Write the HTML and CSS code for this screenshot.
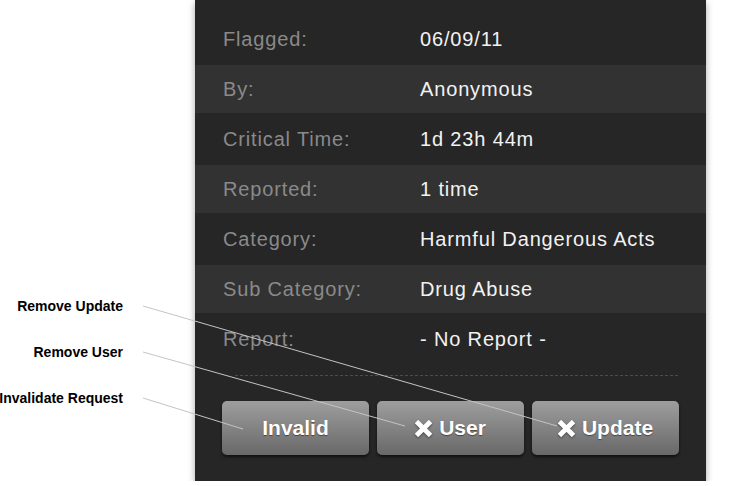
FILE: index.html
```html
<!DOCTYPE html>
<html lang="en">

<head>
  <meta charset="utf-8" />
  <title>Flag detail</title>
  <link rel="stylesheet" href="styles.css">
</head>

<body>
  <div class="panel">
    <div class="rows">
      <div class="row">
        <span class="label">Flagged:</span>
        <span class="value">06/09/11</span>
      </div>
      <div class="row alt">
        <span class="label">By:</span>
        <span class="value">Anonymous</span>
      </div>
      <div class="row">
        <span class="label">Critical Time:</span>
        <span class="value">1d 23h 44m</span>
      </div>
      <div class="row alt">
        <span class="label">Reported:</span>
        <span class="value">1 time</span>
      </div>
      <div class="row">
        <span class="label">Category:</span>
        <span class="value">Harmful Dangerous Acts</span>
      </div>
      <div class="row alt">
        <span class="label">Sub Category:</span>
        <span class="value">Drug Abuse</span>
      </div>
      <div class="row">
        <span class="label">Report:</span>
        <span class="value">- No Report -</span>
      </div>
    </div>

    <div class="divider"></div>

    <div class="actions">
      <button class="btn" type="button">Invalid</button>
      <button class="btn" type="button">
        <svg class="ico" viewBox="0 0 16 16"><path d="M3 3 L13 13 M13 3 L3 13" /></svg>User
      </button>
      <button class="btn" type="button">
        <svg class="ico" viewBox="0 0 16 16"><path d="M3 3 L13 13 M13 3 L3 13" /></svg>Update
      </button>
    </div>
  </div>

  <!-- annotations -->
  <div class="note note-update">Remove Update</div>
  <div class="note note-user">Remove User</div>
  <div class="note note-invalid">Invalidate Request</div>
  <svg class="callouts" width="738" height="486" viewBox="0 0 738 486">
    <line x1="143" y1="306" x2="557" y2="426" />
    <line x1="143" y1="352" x2="405" y2="426" />
    <line x1="143" y1="398" x2="243" y2="429" />
  </svg>
</body>

</html>
```

FILE: styles.css
```css
body {
  margin: 0;
  background-color: #fff;
  font-family: "Liberation Sans", Arial, sans-serif;
  overflow: hidden;
}

.panel {
  width: 511px;
  height: 481px;
  margin-left: 195px;
  padding-top: 13px;
  box-sizing: border-box;
  background-color: #262626;
  box-shadow: 0 3px 7px rgba(0, 0, 0, 0.35);
}

.row {
  display: flex;
  align-items: center;
  height: 52px;
  padding-left: 28px;
  font-size: 20px;
  letter-spacing: 0.85px;
}

.row.alt {
  height: 48px;
  background-color: #323232;
}

.label {
  width: 197px;
  color: #8a8a8a;
}

.value {
  color: #f2f2f2;
}

.divider {
  margin: 10px 28px 0 40px;
  border-top: 1px dashed #4c4c4c;
}

.actions {
  display: flex;
  gap: 8px;
  padding: 25px 27px 0;
}

.btn {
  display: flex;
  align-items: center;
  justify-content: center;
  gap: 7px;
  width: 147px;
  height: 54px;
  padding: 0;
  border: 0;
  border-radius: 5px;
  background: linear-gradient(#9e9e9e, #686868);
  box-shadow: 0 2px 3px rgba(0, 0, 0, 0.6);
  color: #fff;
  font-family: "Liberation Sans", Arial, sans-serif;
  font-size: 21px;
  font-weight: bold;
  text-shadow: 0 1px 1px rgba(0, 0, 0, 0.45);
}

.ico {
  width: 17px;
  height: 17px;
  fill: none;
  stroke: #fff;
  stroke-width: 4.5;
  stroke-linecap: square;
  filter: drop-shadow(0 1px 1px rgba(0, 0, 0, 0.45));
}

.note {
  position: absolute;
  right: 615px;
  font-size: 14px;
  font-weight: bold;
  color: #000;
  white-space: nowrap;
  line-height: 16px;
}

.note-update {
  top: 298px;
}

.note-user {
  top: 344px;
}

.note-invalid {
  top: 390px;
}

.callouts {
  position: absolute;
  left: 0;
  top: 0;
  pointer-events: none;
}

.callouts line {
  stroke: #c4c4c4;
  stroke-width: 1;
}
```
